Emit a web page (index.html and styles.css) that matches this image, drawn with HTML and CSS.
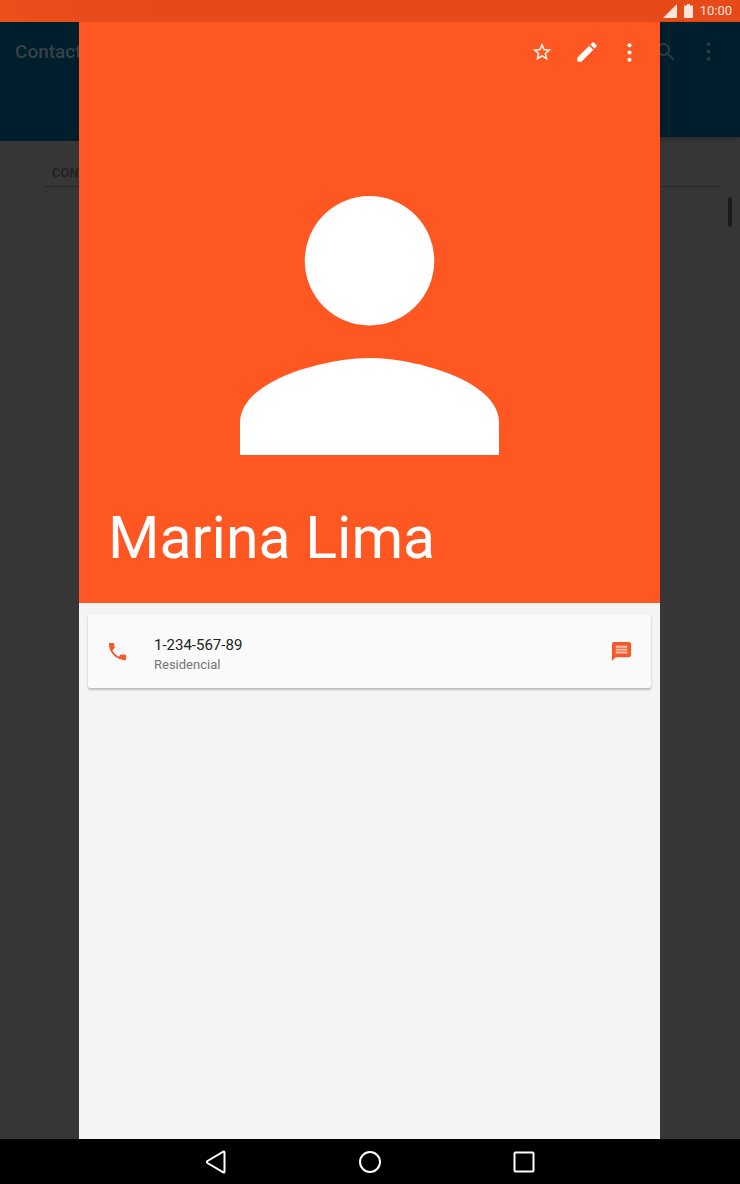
FILE: index.html
```html
<!DOCTYPE html>
<html lang="pt">
<head>
<meta charset="utf-8">
<meta name="viewport" content="width=device-width, initial-scale=1">
<title>Marina Lima</title>
<link rel="stylesheet" href="styles.css">
</head>
<body>
<div class="screen">
  <div class="status-bar">
    <svg class="status-signal" viewBox="0 0 14 14" aria-hidden="true"><path d="M14 0v14H0z"/></svg>
    <svg class="status-battery" viewBox="0 0 9 14" aria-hidden="true"><path d="M3 0h3v1.500h2.500q.5 0 .5.500v11q0 1-1 1H1q-1 0-1-1V2q0-.5.5-.5H3z"/></svg>
    <time>10:00</time>
  </div>

  <div class="stage">
    <div class="backdrop" inert>
      <header class="app-bar">
        <div class="app-title">Contact</div>
        <div class="app-actions">
          <svg class="icon" viewBox="0 0 24 24"><path d="M15.500 14h-.79l-.28-.27A6.470 6.470 0 0 0 16 9.500 6.500 6.500 0 1 0 9.500 16c1.610 0 3.090-.59 4.230-1.570l.27.28v.79l5 4.990L20.490 19l-4.990-5zm-6 0C7.010 14 5 11.990 5 9.500S7.010 5 9.500 5 14 7.010 14 9.500 11.990 14 9.500 14z"/></svg>
          <svg class="icon icon-more" viewBox="0 0 24 24"><circle cx="12" cy="5.500" r="1.700"/><circle cx="12" cy="12" r="1.700"/><circle cx="12" cy="18.500" r="1.700"/></svg>
        </div>
      </header>
      <div class="list">
        <div class="list-heading">CON</div>
        <div class="scroll-thumb"></div>
      </div>
    </div>

    <main class="contact">
      <header class="hero">
        <div class="toolbar">
          <button class="tool" type="button" aria-label="Favorito">
            <svg class="icon icon-star" viewBox="0 0 24 24"><path d="M22 9.240l-7.190-.62L12 2 9.190 8.630 2 9.240l5.460 4.730L5.820 21 12 17.270 18.180 21l-1.630-7.030L22 9.240zM12 15.400l-3.760 2.270 1-4.280-3.320-2.880 4.380-.38L12 6.100l1.710 4.040 4.380.38-3.320 2.880 1 4.280L12 15.400z"/></svg>
          </button>
          <button class="tool" type="button" aria-label="Editar">
            <svg class="icon icon-edit" viewBox="0 0 24 24"><path d="M3 17.250V21h3.750L17.810 9.940l-3.750-3.750L3 17.250zM20.710 7.040a1 1 0 0 0 0-1.410l-2.340-2.340a1 1 0 0 0-1.410 0l-1.830 1.830 3.750 3.750 1.830-1.830z"/></svg>
          </button>
          <button class="tool" type="button" aria-label="Mais">
            <svg class="icon icon-more" viewBox="0 0 24 24"><circle cx="12" cy="5.500" r="1.800"/><circle cx="12" cy="12" r="1.800"/><circle cx="12" cy="18.500" r="1.800"/></svg>
          </button>
        </div>
        <svg class="avatar" viewBox="4 4 16 16" aria-hidden="true"><circle cx="12" cy="8" r="4"/><path d="M12 14c-2.670 0-8 1.340-8 4v2h16v-2c0-2.660-5.330-4-8-4z"/></svg>
        <h1 class="name">Marina Lima</h1>
      </header>

      <section class="card">
        <button class="card-action" type="button" aria-label="Ligar">
          <svg class="icon icon-card" viewBox="0 0 24 24"><path d="M6.620 10.790c1.440 2.830 3.760 5.140 6.590 6.590l2.200-2.200c.27-.27.67-.36 1.020-.24 1.120.37 2.330.57 3.570.57.55 0 1 .45 1 1V20c0 .55-.45 1-1 1-9.390 0-17-7.610-17-17 0-.55.45-1 1-1h3.500c.55 0 1 .45 1 1 0 1.250.2 2.450.57 3.570.11.35.03.74-.25 1.020l-2.200 2.200z"/></svg>
        </button>
        <div class="entry">
          <div class="number">1-234-567-89</div>
          <div class="kind">Residencial</div>
        </div>
        <button class="card-action" type="button" aria-label="Mensagem">
          <svg class="icon icon-card" viewBox="0 0 24 24"><path class="bubble-lines" d="M5.500 5.500h13v9h-13z"/><path d="M20 2H4c-1.100 0-1.990.9-1.990 2L2 22l4-4h14c1.100 0 2-.9 2-2V4c0-1.100-.9-2-2-2zm-2 12H6v-2h12v2zm0-3H6V9h12v2zm0-3H6V6h12v2z"/></svg>
        </button>
      </section>
    </main>
  </div>

  <nav class="nav-bar">
    <button class="nav-button" type="button" aria-label="Voltar"><svg viewBox="0 0 24 24"><path d="M20.500 2.500v19q0 1.500-1.200.8L3.500 13q-1.300-1 0-2L19.300 1.700q1.200-.7 1.200.8z"/></svg></button>
    <button class="nav-button" type="button" aria-label="Início"><svg viewBox="0 0 24 24"><circle cx="12" cy="12" r="10"/></svg></button>
    <button class="nav-button" type="button" aria-label="Recentes"><svg viewBox="0 0 24 24"><rect x="2.500" y="2.500" width="19" height="19" rx="1"/></svg></button>
  </nav>
</div>
</body>
</html>
```

FILE: styles.css
```css
* {
  box-sizing: border-box;
}

body {
  margin: 0;
  font-family: Roboto, "Noto Sans", sans-serif;
}

button {
  display: grid;
  place-items: center;
  padding: 0;
  border: 0;
  background: none;
  color: inherit;
}

.screen {
  display: grid;
  grid-template-rows: 22px 1fr 45px;
  min-height: 100vh;
}

.icon {
  display: block;
  width: 24px;
  height: 24px;
  fill: currentColor;
}

.icon-star {
  width: 22px;
  height: 22px;
}

.icon-edit {
  width: 26px;
  height: 26px;
}

.icon-more {
  width: 27px;
  height: 27px;
}

.icon-card {
  width: 23px;
  height: 23px;
}

.bubble-lines {
  fill: #f9c4b3;
}

.status-bar {
  display: flex;
  align-items: center;
  justify-content: flex-end;
  padding-right: 8px;
  background: linear-gradient(90deg, #eb4f1a, #e64a19 160px);
  color: #ffe4dc;
  font-size: 13px;
  line-height: 22px;
}

.status-bar svg {
  height: 14px;
  fill: currentColor;
}

.status-signal {
  width: 14px;
  margin-right: 7px;
}

.status-battery {
  width: 9px;
  margin-right: 7px;
}

.stage {
  display: grid;
}

.backdrop,
.contact {
  grid-area: 1 / 1;
}

.backdrop {
  background: #363636;
}

.app-bar {
  display: flex;
  align-items: flex-start;
  height: 119px;
  color: #364247;
}

.app-title {
  flex: 1;
  height: 119px;
  padding: 18px 15px;
  background: #001e2b;
  font-size: 19px;
  font-weight: 500;
  line-height: 24px;
}

.app-actions {
  display: flex;
  align-items: center;
  gap: 17px;
  height: 115px;
  padding: 0 18px 56px 0;
  background: #001e2b;
  box-shadow: 0 2px 3px #2a2a2a;
  color: #2f3b40;
}

.list {
  display: flex;
  flex-direction: column;
  padding: 23px 22px 0 45px;
}

.list-heading {
  padding: 0 7px 4px;
  border-bottom: 1px solid #272727;
  color: #1f1f1f;
  font-size: 13px;
  font-weight: 500;
  line-height: 18px;
}

.scroll-thumb {
  align-self: flex-end;
  width: 4px;
  height: 30px;
  margin: 10px -14px 0 0;
  border-radius: 2px;
  background: #1a1a1a;
}

.contact {
  margin: 0 80px 0 79px;
  background: #f4f4f4;
}

.hero {
  display: flex;
  flex-direction: column;
  aspect-ratio: 1;
  background: #ff5722;
  color: #fff;
}

.toolbar {
  display: flex;
  justify-content: flex-end;
  height: 60px;
  padding-right: 9px;
}

.tool {
  width: 44px;
}

.tool:first-child {
  margin-right: 1px;
}

.tool:last-child {
  margin-left: -2px;
}

.avatar {
  width: 259px;
  margin: 114px auto 0;
  fill: currentColor;
}

.name {
  margin: auto 29px 30px;
  font-size: 59px;
  font-weight: 400;
  line-height: 70px;
}

.card {
  display: flex;
  align-items: center;
  min-height: 74px;
  margin: 11px 9px 0;
  padding: 0 18px;
  border-radius: 2px;
  background: #fafafa;
  box-shadow: 0 2px 2px #bdbdbd, 0 0 2px #dcdcdc;
  color: #f4592b;
}

.entry {
  flex: 1;
  padding: 8px 25px 0;
}

.number {
  color: #212121;
  font-size: 15px;
  line-height: 20px;
}

.kind {
  color: #757575;
  font-size: 13px;
  line-height: 20px;
}

.nav-bar {
  display: flex;
  align-items: center;
  justify-content: center;
  gap: 110px;
  background: #000;
}

.nav-button {
  width: 44px;
  height: 44px;
}

.nav-button svg {
  width: 24px;
  height: 24px;
  fill: none;
  stroke: #fff;
  stroke-width: 2;
}
```
